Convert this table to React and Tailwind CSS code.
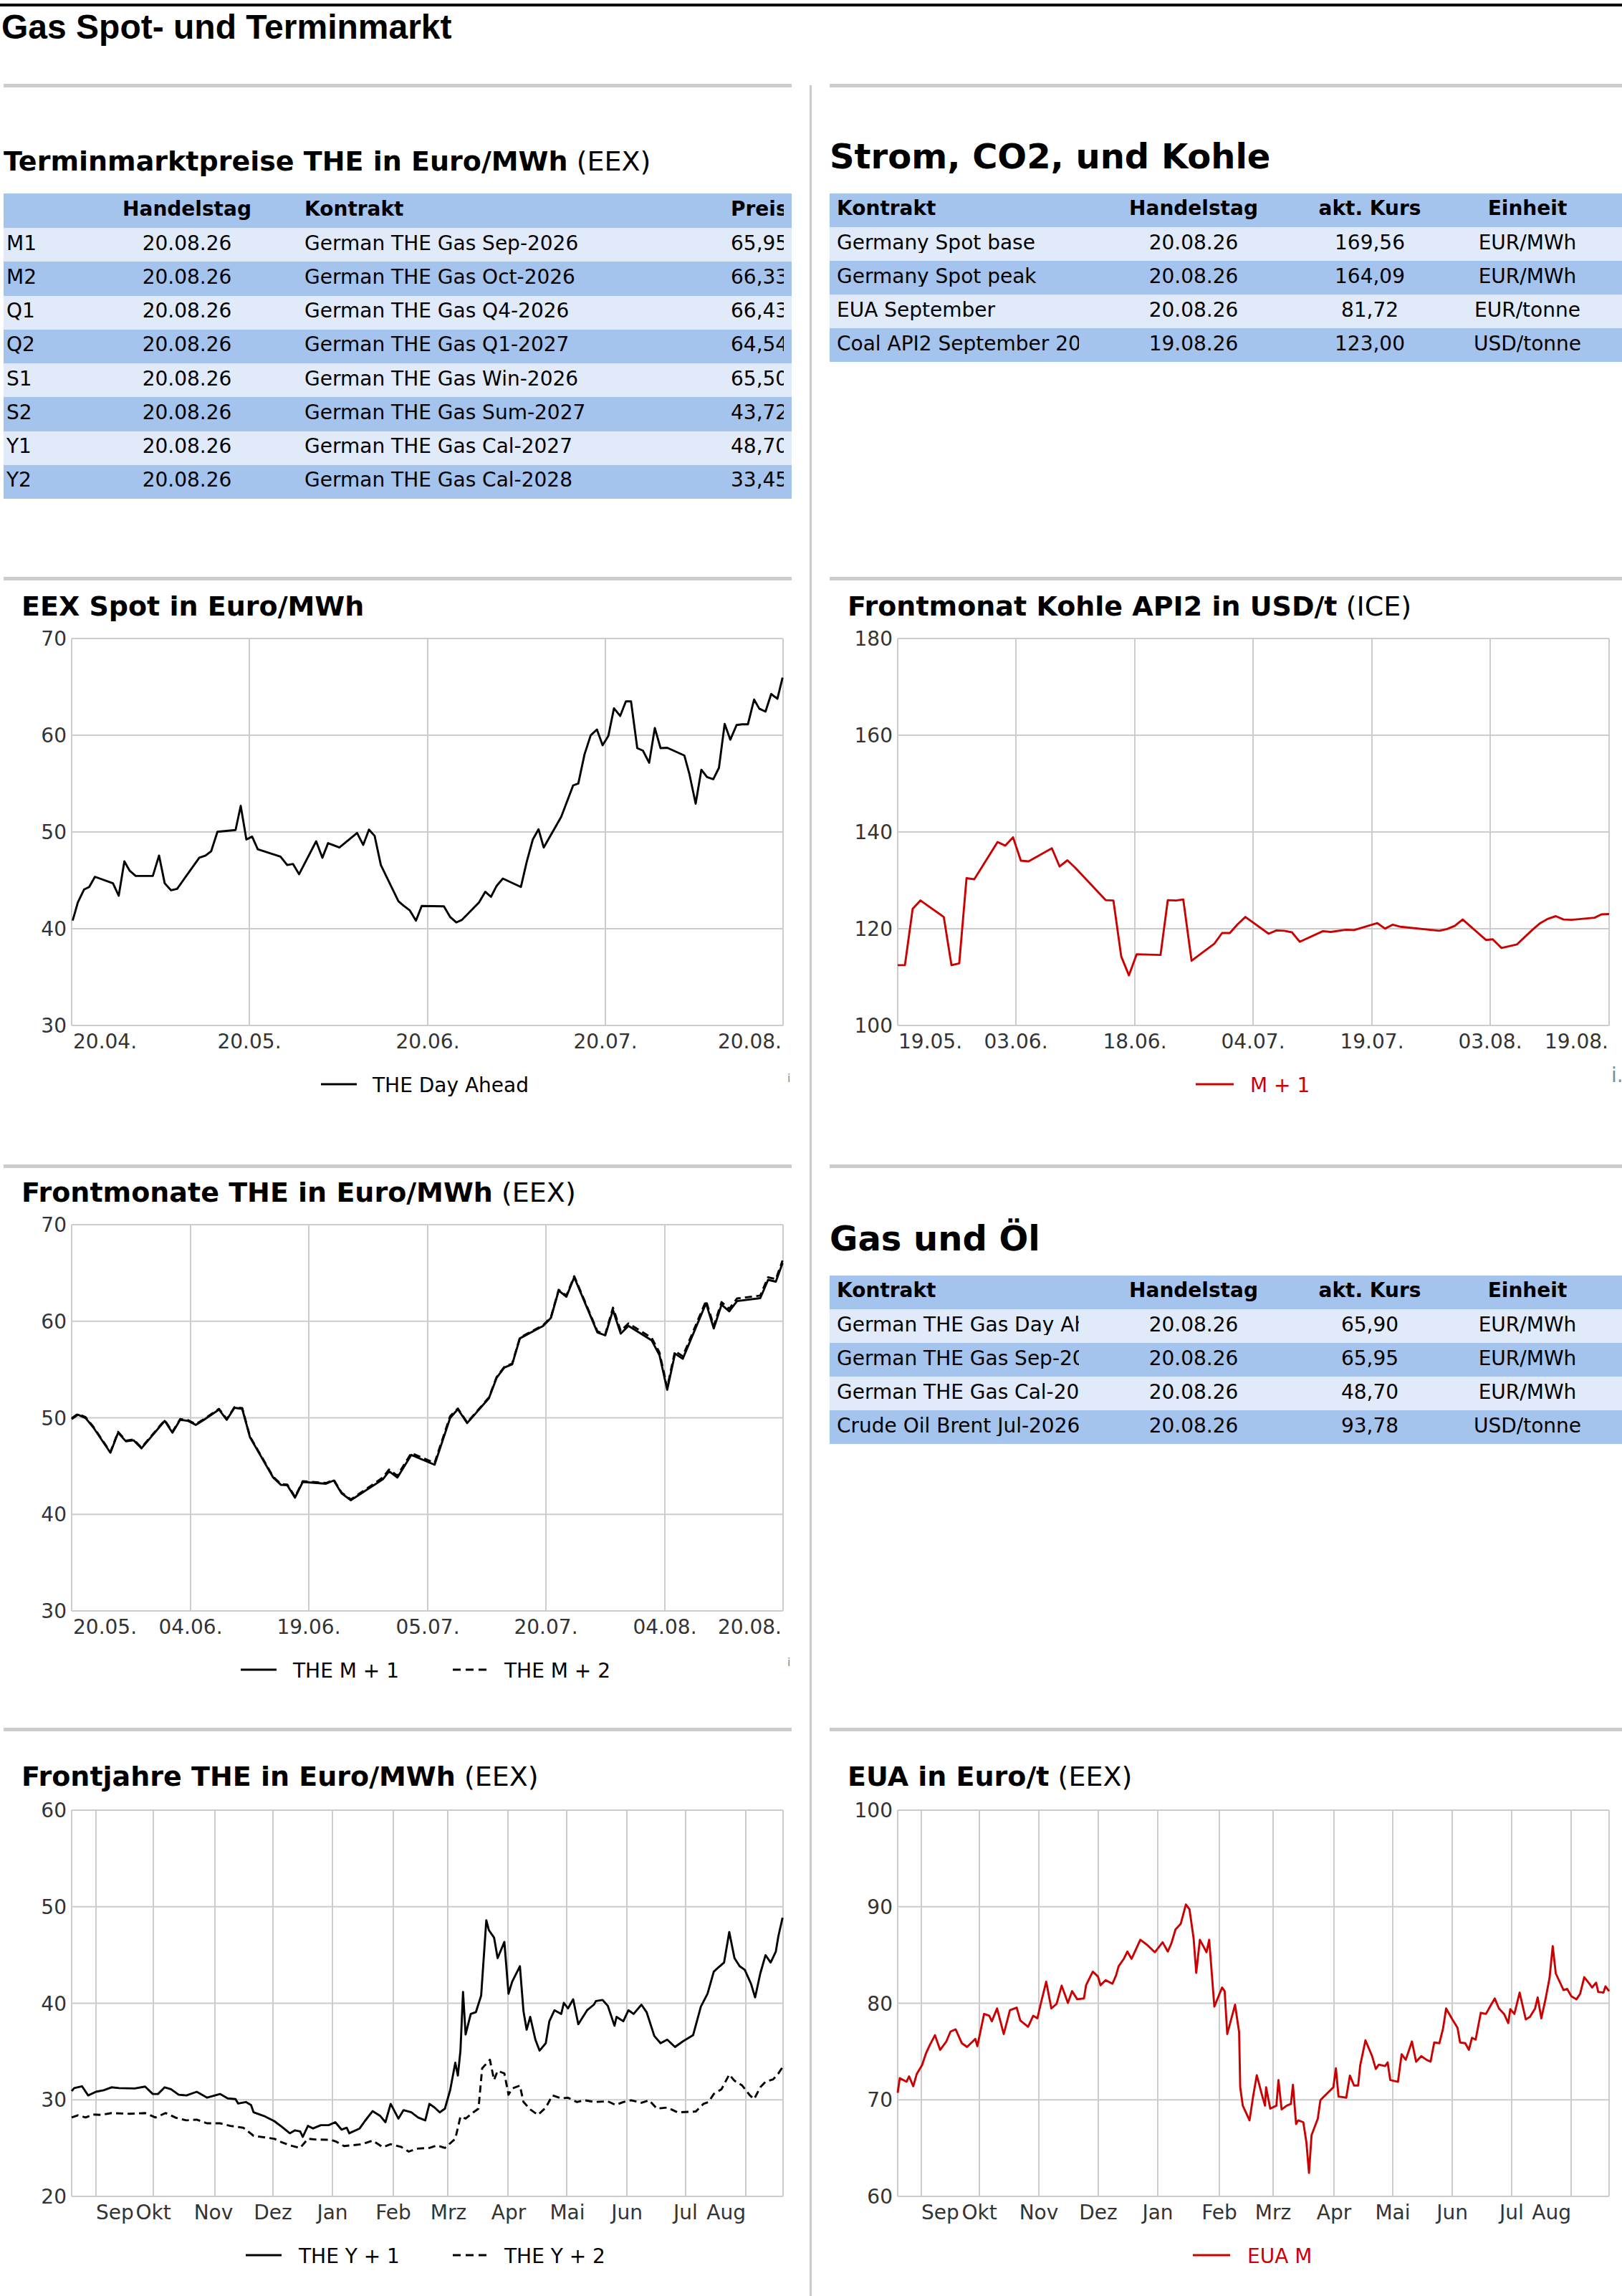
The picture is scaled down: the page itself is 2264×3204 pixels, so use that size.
import React from "react";

// table colours
const BLUE = "bg-[#a4c3ed]";
const LIGHT = "bg-[#e1eaf9]";

const PX_L = 95;
const PX_R = 1088;

const spot = [[140,990],[150,940],[162,905],[172,898],[183,870],[218,888],[229,922],[240,828],[250,853],[262,868],[295,868],[307,812],[318,888],[330,907],[342,903],[385,818],[397,812],[408,800],[420,747],[455,742],[465,676],[476,768],[487,760],[498,795],[542,815],[555,838],[566,835],[578,863],[611,773],[623,818],[634,778],[656,790],[690,750],[702,783],[713,741],[724,758],[736,838],[770,937],[781,950],[792,962],[804,990],[815,950],[858,951],[870,980],[882,995],[893,988],[926,940],[938,911],[949,925],[960,895],[972,875],[1007,898],[1018,830],[1030,768],[1041,740],[1051,790],[1085,706],[1108,620],[1118,615],[1130,535],[1142,483],[1154,467],[1165,510],[1176,485],[1187,409],[1199,430],[1210,390],[1220,390],[1232,518],[1243,525],[1255,558],[1266,463],[1277,518],[1290,517],[1323,538],[1333,590],[1345,670],[1356,577],[1367,597],[1379,603],[1390,572],[1401,452],[1412,495],[1424,455],[1435,453],[1446,453],[1458,385],[1468,410],[1480,418],[1491,370],[1503,383],[1513,325]];

const coal = [[168,1112],[182,1112],[197,958],[212,935],[257,980],[272,1112],[287,1107],[301,874],[316,877],[361,775],[376,785],[391,762],[406,826],[421,828],[466,792],[481,842],[496,825],[511,845],[570,934],[585,935],[600,1088],[615,1140],[630,1082],[676,1084],[690,934],[706,935],[720,932],[736,1100],[780,1053],[795,1024],[810,1024],[825,1000],[840,980],[885,1026],[900,1017],[915,1018],[930,1022],[945,1048],[990,1019],[1005,1021],[1035,1015],[1050,1016],[1095,997],[1110,1012],[1125,1001],[1140,1007],[1215,1018],[1230,1013],[1245,1004],[1260,987],[1305,1043],[1318,1041],[1335,1065],[1365,1055],[1395,1015],[1410,997],[1425,985],[1440,978],[1455,987],[1470,988],[1515,982],[1528,973],[1543,972]];

const m1 = [[138,745],[150,733],[165,742],[180,768],[213,837],[228,782],[243,806],[258,803],[273,825],[318,750],[333,782],[348,747],[363,750],[378,761],[393,748],[423,719],[438,747],[453,714],[468,717],[483,795],[528,905],[543,925],[555,926],[570,960],[585,917],[630,922],[645,913],[660,948],[678,967],[740,910],[752,888],[768,905],[795,843],[840,870],[870,742],[885,718],[903,756],[945,688],[960,632],[975,604],[990,595],[1005,524],[1050,490],[1065,468],[1080,393],[1095,410],[1110,357],[1155,508],[1170,516],[1185,447],[1200,511],[1215,490],[1260,530],[1275,570],[1290,665],[1305,566],[1320,580],[1365,428],[1380,497],[1395,432],[1410,450],[1425,422],[1470,414],[1485,364],[1500,369],[1513,318]];
const m2 = m1.map(([x, y]) => [x, y + (x > 1180 ? -7 : x > 700 && x < 880 ? -5 : x > 1090 ? -3 : -2)]);

const y1 = [[138,1010],[143,1002],[158,997],[170,1022],[185,1012],[200,1008],[215,1000],[230,1002],[260,1003],[280,998],[295,1018],[305,1018],[318,1000],[330,1005],[345,1020],[360,1022],[380,1012],[400,1028],[425,1018],[440,1030],[455,1032],[460,1044],[475,1040],[485,1048],[490,1068],[510,1078],[530,1092],[545,1108],[560,1125],[570,1117],[580,1120],[585,1135],[595,1105],[605,1112],[620,1103],[635,1103],[648,1095],[660,1115],[670,1110],[675,1125],[695,1112],[705,1092],[720,1065],[735,1078],[745,1095],[755,1045],[770,1085],[780,1062],[795,1068],[808,1082],[822,1090],[830,1045],[840,1055],[850,1068],[860,1058],[870,1008],[880,933],[885,968],[890,900],[895,740],[900,856],[910,800],[920,795],[930,750],[940,545],[945,572],[955,592],[962,648],[975,604],[983,745],[990,712],[1005,670],[1012,793],[1018,843],[1025,808],[1035,870],[1043,900],[1055,880],[1062,820],[1072,790],[1085,800],[1090,770],[1098,785],[1108,760],[1118,828],[1135,790],[1148,775],[1152,765],[1165,762],[1175,778],[1188,832],[1192,808],[1205,820],[1215,790],[1225,800],[1240,775],[1250,795],[1265,860],[1277,880],[1290,870],[1305,890],[1320,875],[1340,858],[1355,780],[1368,745],[1380,685],[1390,672],[1400,660],[1410,577],[1420,648],[1430,670],[1440,680],[1452,718],[1460,755],[1470,690],[1480,640],[1490,660],[1500,630],[1505,588],[1513,538]];

const y2 = [[138,1082],[150,1076],[165,1082],[180,1074],[195,1075],[215,1070],[250,1072],[280,1070],[300,1082],[320,1070],[340,1083],[360,1090],[380,1088],[400,1098],[425,1098],[445,1105],[470,1110],[490,1132],[530,1140],[545,1150],[560,1158],[580,1165],[595,1140],[610,1142],[640,1143],[650,1148],[665,1160],[700,1155],[720,1145],[740,1163],[755,1155],[775,1162],[790,1175],[805,1167],[830,1165],[845,1158],[860,1165],[880,1140],[890,1080],[900,1085],[915,1068],[925,1058],[932,948],[947,925],[955,980],[962,955],[975,962],[983,1020],[990,1003],[1005,995],[1012,1040],[1025,1060],[1040,1075],[1055,1055],[1068,1022],[1085,1030],[1098,1028],[1115,1040],[1130,1035],[1150,1040],[1175,1038],[1190,1048],[1205,1040],[1220,1035],[1240,1042],[1255,1035],[1270,1058],[1290,1055],[1310,1068],[1345,1066],[1360,1045],[1370,1040],[1380,1018],[1395,1005],[1410,965],[1420,982],[1435,995],[1450,1022],[1458,1032],[1470,1000],[1480,985],[1495,978],[1505,962],[1513,945]];

const eua = [[168,1015],[172,975],[185,985],[190,970],[198,997],[205,963],[215,940],[222,910],[230,885],[240,858],[250,898],[262,875],[270,848],[280,842],[292,880],[302,890],[318,868],[322,888],[335,800],[345,805],[350,820],[360,785],[373,855],[385,790],[398,783],[405,818],[420,835],[430,805],[438,812],[445,770],[455,712],[465,785],[475,773],[485,723],[497,770],[505,738],[515,760],[528,758],[532,722],[545,685],[555,698],[560,722],[570,708],[583,718],[590,695],[595,670],[605,650],[612,630],[620,650],[625,635],[637,598],[650,612],[665,632],[680,605],[690,630],[697,608],[705,570],[715,555],[725,502],[732,515],[740,595],[745,688],[752,598],[765,632],[770,598],[780,780],[795,728],[800,738],[805,855],[820,775],[828,850],[830,1000],[835,1050],[848,1090],[855,1025],[862,967],[872,1020],[878,1050],[880,1000],[888,1058],[900,1050],[904,980],[910,1060],[920,1050],[928,1045],[932,993],[938,1100],[942,1090],[952,1095],[958,1150],[963,1233],[968,1130],[980,1085],[985,1035],[992,1025],[1010,1000],[1015,948],[1020,1025],[1035,1028],[1042,968],[1050,995],[1058,995],[1062,940],[1072,872],[1085,915],[1092,950],[1098,938],[1110,942],[1115,932],[1120,980],[1135,985],[1142,910],[1150,925],[1162,875],[1170,930],[1180,915],[1190,925],[1198,930],[1205,878],[1215,880],[1222,840],[1228,785],[1240,815],[1250,838],[1255,878],[1265,880],[1272,898],[1278,865],[1285,870],[1295,797],[1305,800],[1315,775],[1322,758],[1330,785],[1340,800],[1348,825],[1352,787],[1360,800],[1370,742],[1382,815],[1390,808],[1400,785],[1405,755],[1412,812],[1420,760],[1428,702],[1434,615],[1440,690],[1455,735],[1462,732],[1470,752],[1480,760],[1487,745],[1495,700],[1505,718],[1510,728],[1518,715],[1522,740],[1532,742],[1536,725],[1543,738]];

function toPath(pts, box, top, bottom) {
    const [zl, zr, zt, zb] = box;
    return pts
        .map(([zx, zy], i) => {
            const x = PX_L + ((zx - zl) / (zr - zl)) * (PX_R - PX_L);
            const y = top + ((zy - zt) / (zb - zt)) * (bottom - top);
            return `${i ? "L" : "M"}${x.toFixed(1)} ${y.toFixed(1)}`;
        })
        .join(" ");
}

function Chart({ title, source, mt, height, top, bottom, yTicks, grid, labels, series, legend, mark, width = 1100 }) {
    const svgTop = 5 + mt + 38;
    const step = (bottom - top) / (yTicks.length - 1);
    const legendY = bottom + 82;
    return (
        <div className="shrink-0" style={{ height }}>
            <div className="h-[5px] bg-[#cccccc]" />
            <div className="h-[38px] pl-[25px] text-[38px] leading-[38px] whitespace-nowrap" style={{ marginTop: mt }}>
                <span className="font-bold">{title}</span>
                {source && <span> {source}</span>}
            </div>
            <svg
                width={width}
                height={height - svgTop}
                viewBox={`0 ${svgTop} ${width} ${height - svgTop}`}
                className="block"
                fontFamily="DejaVu Sans, sans-serif"
            >
                {yTicks.map((t, i) => (
                    <g key={t}>
                        <line x1={PX_L} x2={PX_R} y1={top + i * step} y2={top + i * step} stroke="#cccccc" strokeWidth="2" />
                        <text x="88" y={top + i * step + 10} textAnchor="end" fontSize="28" fill="#333333">{t}</text>
                    </g>
                ))}
                {[PX_L, ...grid, PX_R].map((gx) => (
                    <line key={gx} x1={gx} x2={gx} y1={top} y2={bottom} stroke="#cccccc" strokeWidth="2" />
                ))}
                {labels.map(([t, lx, anchor]) => (
                    <text key={t} x={lx} y={bottom + 32} textAnchor={anchor} fontSize="28" fill="#333333">{t}</text>
                ))}
                {series.map((s, i) => (
                    <path
                        key={i}
                        d={toPath(s.pts, s.box, top, bottom)}
                        fill="none"
                        stroke={s.color}
                        strokeWidth="2.9"
                        strokeLinejoin="round"
                        strokeDasharray={s.dash ? "10 6" : undefined}
                    />
                ))}
                {legend.map((l) => (
                    <g key={l.label}>
                        <line x1={l.x1} x2={l.x2} y1={legendY} y2={legendY} stroke={l.color} strokeWidth="3" strokeDasharray={l.dash ? "11 7" : undefined} />
                        <text x={l.tx} y={legendY + 11} fontSize="28" fill={l.color}>{l.label}</text>
                    </g>
                ))}
                {mark && (
                    <text x={mark.x} y={mark.y} fontSize={mark.size} fill="#888888">i.</text>
                )}
            </svg>
        </div>
    );
}

const leftRows = [
    ["M1", "German THE Gas Sep-2026", "65,95"],
    ["M2", "German THE Gas Oct-2026", "66,33"],
    ["Q1", "German THE Gas Q4-2026", "66,43"],
    ["Q2", "German THE Gas Q1-2027", "64,54"],
    ["S1", "German THE Gas Win-2026", "65,50"],
    ["S2", "German THE Gas Sum-2027", "43,72"],
    ["Y1", "German THE Gas Cal-2027", "48,70"],
    ["Y2", "German THE Gas Cal-2028", "33,45"],
];

const stromRows = [
    ["Germany Spot base", "20.08.26", "169,56", "EUR/MWh"],
    ["Germany Spot peak", "20.08.26", "164,09", "EUR/MWh"],
    ["EUA September", "20.08.26", "81,72", "EUR/tonne"],
    ["Coal API2 September 2026", "19.08.26", "123,00", "USD/tonne"],
];

const gasRows = [
    ["German THE Gas Day Ahead", "20.08.26", "65,90", "EUR/MWh"],
    ["German THE Gas Sep-2026", "20.08.26", "65,95", "EUR/MWh"],
    ["German THE Gas Cal-2027", "20.08.26", "48,70", "EUR/MWh"],
    ["Crude Oil Brent Jul-2026", "20.08.26", "93,78", "USD/tonne"],
];

function PriceTable() {
    return (
        <div className="mt-[26px] w-[1100px] overflow-hidden text-[28px] leading-none">
            <div className={`flex h-[48px] items-center pb-[5px] font-bold ${BLUE}`}>
                <div className="w-[96px] shrink-0" />
                <div className="w-[320px] shrink-0 text-center">Handelstag</div>
                <div className="w-[599px] shrink-0 pl-[4px]">Kontrakt</div>
                <div className="w-[74px] shrink-0 overflow-hidden whitespace-nowrap">Preis</div>
            </div>
            {leftRows.map(([k, name, price], i) => (
                <div key={k} className={`flex h-[47.25px] items-center pb-[4px] ${i % 2 ? BLUE : LIGHT}`}>
                    <div className="w-[96px] shrink-0 pl-[4px]">{k}</div>
                    <div className="w-[320px] shrink-0 text-center">20.08.26</div>
                    <div className="w-[599px] shrink-0 pl-[4px] whitespace-nowrap">{name}</div>
                    <div className="w-[74px] shrink-0 overflow-hidden whitespace-nowrap">{price}</div>
                </div>
            ))}
        </div>
    );
}

function QuoteTable({ rows, mt }) {
    return (
        <div className="w-[1106px] text-[28px] leading-none" style={{ marginTop: mt }}>
            <div className={`flex h-[47px] items-center pb-[5px] font-bold ${BLUE}`}>
                <div className="w-[367px] shrink-0 pl-[10px]">Kontrakt</div>
                <div className="w-[282px] shrink-0 text-center">Handelstag</div>
                <div className="w-[210px] shrink-0 text-center">akt. Kurs</div>
                <div className="w-[230px] shrink-0 text-center">Einheit</div>
            </div>
            {rows.map(([name, day, val, unit], i) => (
                <div key={name} className={`flex h-[47px] items-center pb-[4px] ${i % 2 ? BLUE : LIGHT}`}>
                    <div className="w-[367px] shrink-0 pl-[10px] pr-[19px]">
                        <div className="overflow-hidden whitespace-nowrap">{name}</div>
                    </div>
                    <div className="w-[282px] shrink-0 text-center">{day}</div>
                    <div className="w-[210px] shrink-0 text-center">{val}</div>
                    <div className="w-[230px] shrink-0 text-center">{unit}</div>
                </div>
            ))}
        </div>
    );
}

const monthLabels = (xs) => {
    const names = ["Sep", "Okt", "Nov", "Dez", "Jan", "Feb", "Mrz", "Apr", "Mai", "Jun", "Jul", "Aug"];
    return names.map((n, i) => [n, xs[i], i === 0 ? "start" : i === names.length - 1 ? "end" : "middle"]);
};

const App = () => {
    const yjGrid = [129, 209, 295, 376, 459, 544, 620, 704, 786, 870, 952, 1036];
    const euaGrid = [128, 209, 292, 375, 458, 544, 619, 704, 786, 869, 952, 1035];
    return (
        <div className="w-[2264px] bg-white font-['DejaVu_Sans',sans-serif] text-black">
            <div className="h-[5px]" />
            <div className="h-[4px] bg-black" />
            <h1 className="mt-[5px] h-[48px] pl-[2px] font-['Liberation_Sans',Arial,sans-serif] text-[48px] font-bold leading-[48px] whitespace-nowrap">
                Gas Spot- und Terminmarkt
            </h1>

            <div className="mt-[55px] flex">
                {/* left column */}
                <div className="ml-[5px] flex w-[1100px] shrink-0 flex-col">
                    <div className="h-[688px] shrink-0">
                        <div className="h-[5px] bg-[#cccccc]" />
                        <h3 className="mt-[84px] h-[38px] text-[38px] leading-[38px] whitespace-nowrap">
                            <span className="font-bold">Terminmarktpreise THE in Euro/MWh</span> (EEX)
                        </h3>
                        <PriceTable />
                    </div>

                    <Chart
                        title="EEX Spot in Euro/MWh"
                        mt={17}
                        height={820}
                        top={86}
                        bottom={626}
                        yTicks={["70", "60", "50", "40", "30"]}
                        grid={[343, 592, 840]}
                        labels={[["20.04.", 97, "start"], ["20.05.", 343, "middle"], ["20.06.", 592, "middle"], ["20.07.", 840, "middle"], ["20.08.", 1086, "end"]]}
                        series={[{ pts: spot, box: [138, 1514, 218, 1277], color: "#000000" }]}
                        legend={[{ x1: 443, x2: 493, tx: 515, label: "THE Day Ahead", color: "#000000" }]}
                        mark={{ x: 1094, y: 705, size: 16 }}
                    />

                    <Chart
                        title="Frontmonate THE in Euro/MWh"
                        source="(EEX)"
                        mt={15}
                        height={786}
                        top={84}
                        bottom={623}
                        yTicks={["70", "60", "50", "40", "30"]}
                        grid={[261, 426, 592, 757, 923]}
                        labels={[["20.05.", 97, "start"], ["04.06.", 261, "middle"], ["19.06.", 426, "middle"], ["05.07.", 592, "middle"], ["20.07.", 757, "middle"], ["04.08.", 923, "middle"], ["20.08.", 1086, "end"]]}
                        series={[
                            { pts: m2, box: [138, 1514, 213, 1270], color: "#000000", dash: true },
                            { pts: m1, box: [138, 1514, 213, 1270], color: "#000000" },
                        ]}
                        legend={[
                            { x1: 331, x2: 381, tx: 404, label: "THE M + 1", color: "#000000" },
                            { x1: 627, x2: 674, tx: 699, label: "THE M + 2", color: "#000000", dash: true },
                        ]}
                        mark={{ x: 1094, y: 700, size: 16 }}
                    />

                    <Chart
                        title="Frontjahre THE in Euro/MWh"
                        source="(EEX)"
                        mt={44}
                        height={793}
                        top={115}
                        bottom={654}
                        yTicks={["60", "50", "40", "30", "20"]}
                        grid={yjGrid}
                        labels={monthLabels([129, 209, 293, 376, 459, 544, 621, 705, 787, 870, 952, 1036])}
                        series={[
                            { pts: y2, box: [138, 1514, 245, 1297], color: "#000000", dash: true },
                            { pts: y1, box: [138, 1514, 245, 1297], color: "#000000" },
                        ]}
                        legend={[
                            { x1: 338, x2: 388, tx: 412, label: "THE Y + 1", color: "#000000" },
                            { x1: 627, x2: 674, tx: 699, label: "THE Y + 2", color: "#000000", dash: true },
                        ]}
                    />
                </div>

                {/* divider */}
                <div className="ml-[25px] mt-[2px] w-[3px] shrink-0 bg-[#cccccc]" />

                {/* right column */}
                <div className="ml-[25px] flex w-[1106px] shrink-0 flex-col overflow-hidden">
                    <div className="h-[688px] shrink-0">
                        <div className="h-[5px] bg-[#cccccc]" />
                        <h2 className="mt-[72px] h-[48px] text-[48px] font-bold leading-[48px] whitespace-nowrap">
                            Strom, CO2, und Kohle
                        </h2>
                        <QuoteTable rows={stromRows} mt={28} />
                    </div>

                    <Chart
                        width={1106}
                        title="Frontmonat Kohle API2 in USD/t"
                        source="(ICE)"
                        mt={17}
                        height={820}
                        top={86}
                        bottom={626}
                        yTicks={["180", "160", "140", "120", "100"]}
                        grid={[260, 426, 591, 757, 922]}
                        labels={[["19.05.", 96, "start"], ["03.06.", 260, "middle"], ["18.06.", 426, "middle"], ["04.07.", 591, "middle"], ["19.07.", 757, "middle"], ["03.08.", 922, "middle"], ["19.08.", 1087, "end"]]}
                        series={[{ pts: coal, box: [168, 1543, 218, 1277], color: "#cc0000" }]}
                        legend={[{ x1: 511, x2: 564, tx: 587, label: "M + 1", color: "#cc0000" }]}
                        mark={{ x: 1091, y: 705, size: 28 }}
                    />

                    <div className="h-[786px] shrink-0">
                        <div className="h-[5px] bg-[#cccccc]" />
                        <h2 className="mt-[74px] h-[48px] text-[48px] font-bold leading-[48px] whitespace-nowrap">
                            Gas und Öl
                        </h2>
                        <QuoteTable rows={gasRows} mt={28} />
                    </div>

                    <Chart
                        width={1106}
                        title="EUA in Euro/t"
                        source="(EEX)"
                        mt={44}
                        height={793}
                        top={115}
                        bottom={654}
                        yTicks={["100", "90", "80", "70", "60"]}
                        grid={euaGrid}
                        labels={monthLabels(euaGrid)}
                        series={[{ pts: eua, box: [168, 1543, 245, 1297], color: "#cc0000" }]}
                        legend={[{ x1: 507, x2: 559, tx: 583, label: "EUA M", color: "#cc0000" }]}
                    />
                </div>
            </div>
        </div>
    );
};

export default App;
